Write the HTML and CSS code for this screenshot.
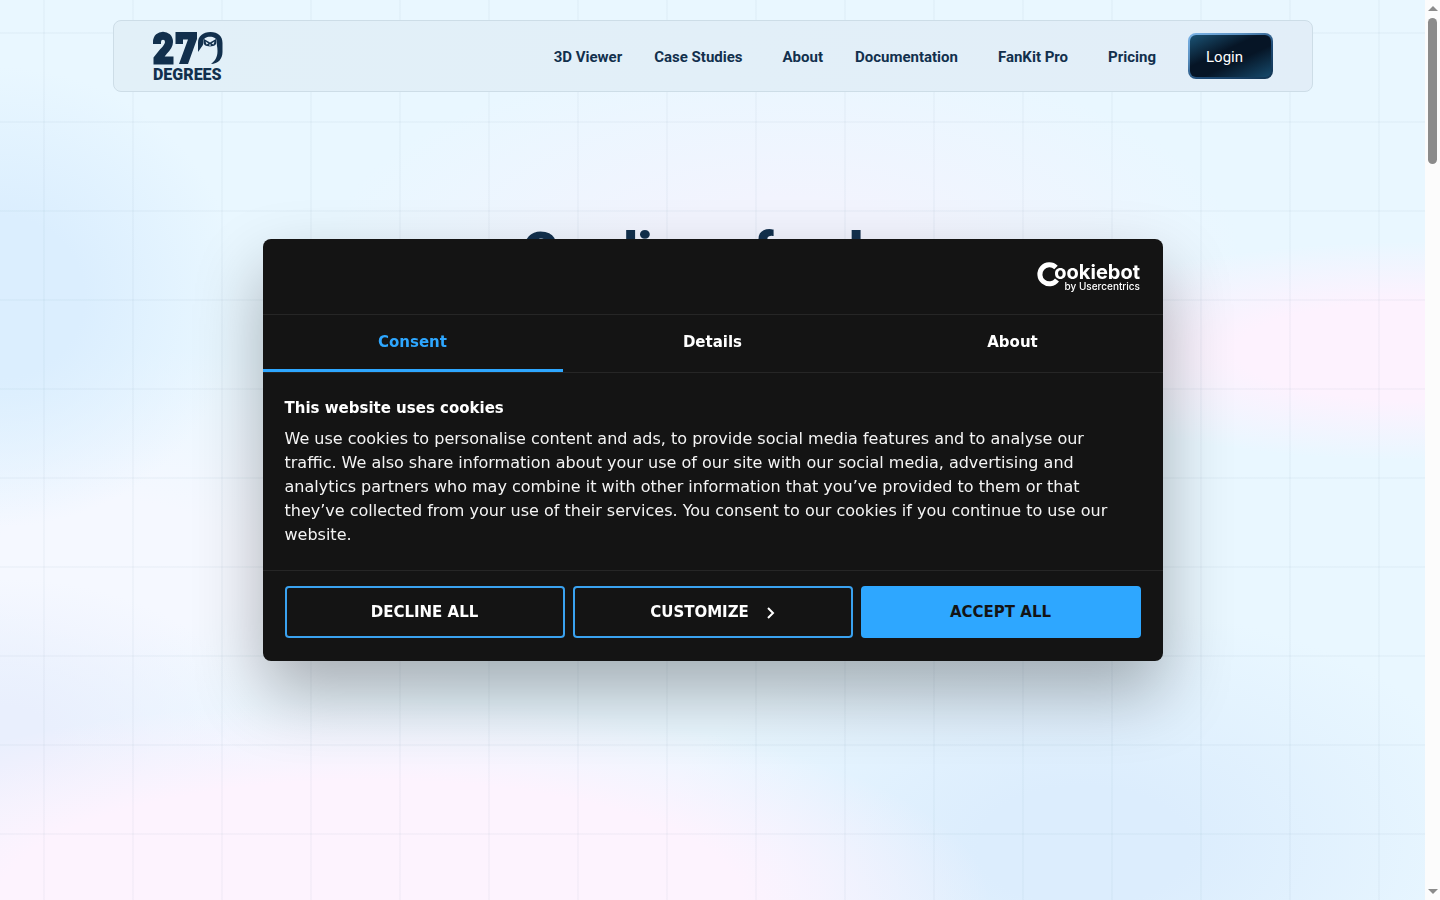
FILE: index.html
```html
<!DOCTYPE html>
<html lang="en">
<head>
<meta charset="utf-8">
<title>270 Degrees</title>
<link rel="stylesheet" href="styles.css">
</head>
<body>
<div class="page">
  <header class="navbar">
    <a class="brand" href="#" aria-label="270 Degrees">
      <svg class="logo" viewBox="0 0 70 49" width="70" height="49" aria-hidden="true">
        <path d="M4 12V10C4 1.500 16 1.500 16 10c0 4-2.500 6.500-5.500 9.500L4.500 27v1.500H20.500" fill="none" stroke="#12304d" stroke-width="8"/>
        <g fill="#12304d">
          <path d="M22.500 0H44v7L35 32H26l9-24.500H30V12h-7.500z"/>
          <path d="M45 20V11C45 4 50 0 57.500 0S69.500 4 69.500 11v9c0 7-4.500 12-11.500 12 4-3 6.500-7 6.500-13 0-4-1-8-2-10h-11.500c0 4-3 6.500-6 11z"/>
        </g>
        <path d="M50 10c0-7 14-7 14 0l-1 6H51z" fill="#e2eff8"/>
        <path d="M51 7l6 3.500L63 7c1.500 3 0 7-3 7l-3 .500-3-.500c-3 0-4.500-4-3-7z" fill="#12304d"/>
        <path d="M52.500 9.500l3 2-2 1zM61.500 9.500l-3 2 2 1zM56 12.500h2l-1 2z" fill="#e2eff8"/>
        <text class="logo-word" x="0" y="48">DEGREES</text>
      </svg>
    </a>
    <nav class="links" aria-label="Main">
      <a class="link" href="#">3D Viewer</a>
      <a class="link spaced" href="#">Case Studies</a>
      <a class="link" href="#">About</a>
      <a class="link spaced" href="#">Documentation</a>
      <a class="link spaced" href="#">FanKit Pro</a>
      <a class="link" href="#">Pricing</a>
      <a class="login" href="#">Login</a>
    </nav>
  </header>
  <main class="hero"><h1 class="hero-title"><span>Grading</span> <span>fandom</span></h1></main>
</div>

<div class="scrollbar" aria-hidden="true">
  <span class="arrow up"></span><span class="thumb"></span><span class="arrow down"></span>
</div>

<div class="overlay">
  <section class="dialog" role="dialog" aria-labelledby="cookie-title">
    <div class="dialog-head">
      <svg class="bot-logo" width="103" height="32" viewBox="0 0 103 32" role="img" aria-label="Cookiebot by Usercentrics">
        <path d="M18 6.500A9.500 9.500 0 1 0 19 19" fill="none" stroke="#fff" stroke-width="5"/>
        <text class="bot-name" x="102" y="18">ookiebot</text>
        <text class="bot-by" x="102" y="29">by Usercentrics</text>
      </svg>
    </div>
    <div class="tabs" role="tablist">
      <button class="tab active" role="tab" aria-selected="true">Consent</button>
      <button class="tab" role="tab" aria-selected="false">Details</button>
      <button class="tab" role="tab" aria-selected="false">About</button>
    </div>
    <div class="dialog-body">
      <h2 class="dialog-title" id="cookie-title">This website uses cookies</h2>
      <p class="dialog-text">We use cookies to personalise content and ads, to provide social media features and to analyse our traffic. We also share information about your use of our site with our social media, advertising and analytics partners who may combine it with other information that you’ve provided to them or that they’ve collected from your use of their services. You consent to our cookies if you continue to use our website.</p>
    </div>
    <div class="actions">
      <button class="action">DECLINE ALL</button>
      <button class="action">CUSTOMIZE<svg class="chevron" width="8" height="12" viewBox="0 0 8 12" aria-hidden="true"><path d="M1 1l5 5-5 5" fill="none" stroke="#fff" stroke-width="2"/></svg></button>
      <button class="action primary">ACCEPT ALL</button>
    </div>
  </section>
</div>
</body>
</html>
```

FILE: styles.css
```css
* { box-sizing: border-box; }
body { margin: 0; height: 100vh; overflow: hidden; display: flex; font-family: Roboto, sans-serif; color: #12304d; }
.page {
  flex: 1;
  min-width: 0;
  height: 100vh;
  padding: 20px 112px 0 113px;
  background:
    linear-gradient(90deg, rgba(30, 80, 110, 0.03) 2px, transparent 2px) 43px 0 / 89px 89px,
    linear-gradient(rgba(30, 80, 110, 0.03) 2px, transparent 2px) 0 32px / 89px 89px,
    radial-gradient(ellipse 240px 230px at 0 33%, #dbeefe 35%, rgba(219, 238, 254, 0) 100%),
    radial-gradient(ellipse 420px 110px at 100% 39%, #fdf2fe 45%, rgba(253, 242, 254, 0) 100%),
    radial-gradient(ellipse 620px 200px at 26% 100%, #fdf3fe 60%, rgba(253, 243, 254, 0) 100%),
    radial-gradient(ellipse 420px 240px at 76% 94%, #dcedfd 25%, rgba(220, 237, 253, 0) 100%),
    radial-gradient(ellipse 260px 160px at 0 82%, #e9effd 20%, rgba(233, 239, 253, 0) 100%),
    radial-gradient(ellipse 460px 210px at 55% 29%, #f2f4fe 30%, rgba(242, 244, 254, 0) 100%),
    radial-gradient(ellipse 420px 220px at 8% 63%, #f5f8ff 30%, rgba(245, 248, 255, 0) 100%),
    #e9f7ff;
}
.navbar {
  display: flex;
  align-items: center;
  justify-content: space-between;
  height: 72px;
  padding: 0 39px;
  border: 1px solid #cddde7;
  border-radius: 8px;
  background: linear-gradient(90deg, #e2f0f8, #e2eef8);
}
.brand, .logo { display: block; }
.logo, .bot-logo { overflow: visible; }
.logo-word { font: 900 16px Roboto, sans-serif; fill: #12304d; }
.links { display: flex; align-items: center; gap: 32px; }
.link { padding-top: 2px; font-size: 15px; font-weight: 700; color: inherit; text-decoration: none; white-space: nowrap; }
.spaced { margin-right: 8px; }
.login {
  width: 85px;
  padding: 12px 16px 10px;
  border: 2px solid transparent;
  border-radius: 8px;
  background:
    linear-gradient(155deg, #1b5476 0%, #061526 40%, #061526 60%, #164a6c 100%) padding-box,
    linear-gradient(155deg, #7db6ea 0%, #5b90c0 30%, #1d4a75 60%, #123552 100%) border-box;
  color: #fff;
  font-size: 15px;
  line-height: 20px;
  text-decoration: none;
}
.hero { padding: 128px 0 0 36px; }
.hero-title { display: flex; justify-content: center; gap: 40px; margin: 0; font-size: 54px; font-weight: 900; line-height: 64px; }

.scrollbar { width: 15px; height: 100vh; padding: 6px 0; display: flex; flex-direction: column; align-items: center; background: #fcfcfc; }
.thumb { width: 9px; height: 146px; margin: 7px 0 auto; border-radius: 5px; background: #8b8b8b; }
.arrow { border: 5px solid transparent; }
.up { border-top: 0; border-bottom-color: #8b8b8b; }
.down { border-bottom: 0; border-top-color: #8b8b8b; }

.overlay { position: fixed; inset: 0 15px 0 0; display: flex; align-items: center; justify-content: center; font-family: "DejaVu Sans", sans-serif; }
.dialog { width: 900px; max-width: 95%; border-radius: 8px; background: #141414; color: #fff; box-shadow: 0 32px 68px rgba(0, 0, 0, 0.3); }
.dialog-head { display: flex; justify-content: flex-end; padding: 22px 22px 21px; border-bottom: 1px solid #262626; }
.bot-name { font: 700 20px Inter, sans-serif; fill: #fff; text-anchor: end; }
.bot-by { font: 500 10px Inter, sans-serif; fill: #fff; text-anchor: end; }
.tabs { display: grid; grid-template-columns: repeat(3, 1fr); border-bottom: 1px solid #262626; }
.tab { height: 57px; padding: 0; border: 0; border-bottom: 3px solid transparent; background: none; color: #fff; font: 700 15px "DejaVu Sans", sans-serif; }
.active { border-color: #2ea7ff; color: #2ea7ff; }
.dialog-body { padding: 24px 22px 23px; }
.dialog-title { margin: 0 0 8px; font-size: 15px; line-height: 22px; }
.dialog-text { margin: 0; font-size: 16px; line-height: 24px; color: #f4f4f4; }
.actions { display: grid; grid-template-columns: repeat(3, 1fr); gap: 8px; padding: 15px 22px 23px; border-top: 1px solid #262626; }
.action { height: 52px; display: flex; align-items: center; justify-content: center; gap: 18px; border: 2px solid #3aa2f0; border-radius: 4px; background: none; color: #fff; font: 700 15px "DejaVu Sans", sans-serif; }
.chevron { margin-top: 2px; }
.primary { border-color: #2ea7ff; background: #2ea7ff; color: #141414; }
```
